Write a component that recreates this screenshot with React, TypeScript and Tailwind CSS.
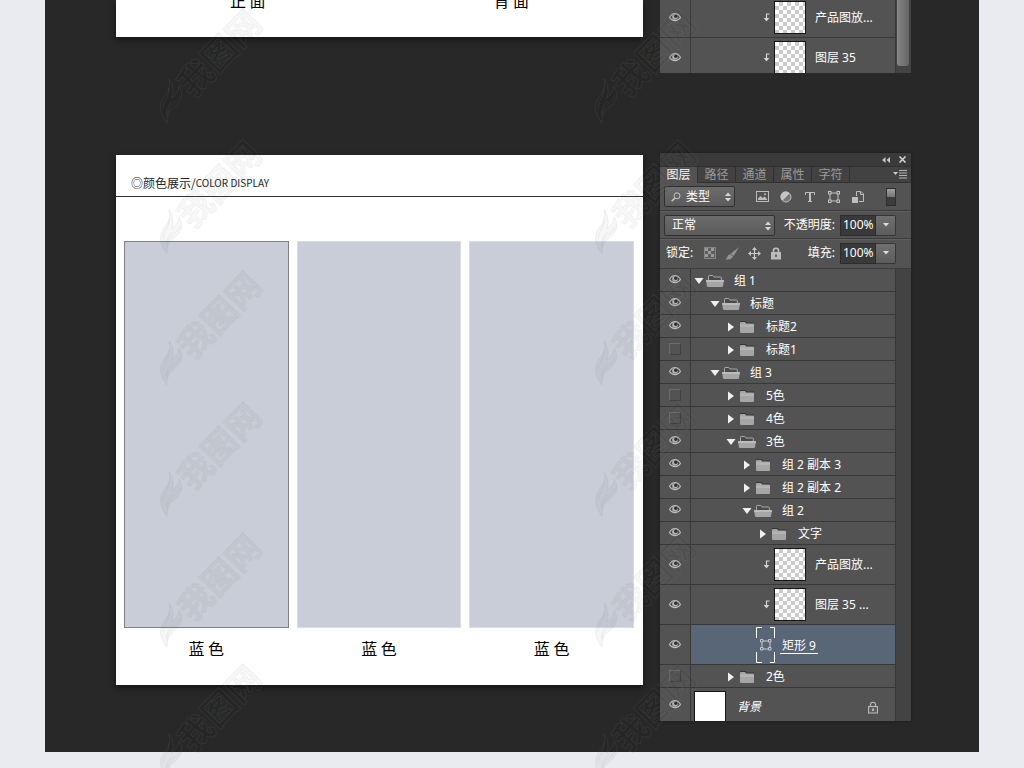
import type { ReactNode } from "react";

type LayerKind = "open" | "closed" | "clip" | "shape" | "background";

interface Layer {
  name: string;
  kind: LayerKind;
  indent?: string;
  hidden?: boolean;
}

const layers: Layer[] = [
  { name: "组 1", kind: "open", indent: "pl-[3px]" },
  { name: "标题", kind: "open", indent: "pl-[19px]" },
  { name: "标题2", kind: "closed", indent: "pl-[35px]" },
  { name: "标题1", kind: "closed", indent: "pl-[35px]", hidden: true },
  { name: "组 3", kind: "open", indent: "pl-[19px]" },
  { name: "5色", kind: "closed", indent: "pl-[35px]", hidden: true },
  { name: "4色", kind: "closed", indent: "pl-[35px]", hidden: true },
  { name: "3色", kind: "open", indent: "pl-[35px]" },
  { name: "组 2 副本 3", kind: "closed", indent: "pl-[51px]" },
  { name: "组 2 副本 2", kind: "closed", indent: "pl-[51px]" },
  { name: "组 2", kind: "open", indent: "pl-[51px]" },
  { name: "文字", kind: "closed", indent: "pl-[67px]" },
  { name: "产品图放...", kind: "clip" },
  { name: "图层 35 ...", kind: "clip" },
  { name: "矩形 9", kind: "shape" },
  { name: "2色", kind: "closed", indent: "pl-[35px]", hidden: true },
  { name: "背景", kind: "background" },
];

const tabs = ["图层", "路径", "通道", "属性", "字符"];
const swatches = ["蓝 色", "蓝 色", "蓝 色"];

/* ---------- icons ---------- */

function EyeIcon() {
  return (
    <svg className="w-3 h-[10px] -translate-y-px" viewBox="0 0 12 10" fill="none">
      <path d="M.5 5.500C2 2.500 4 1.500 6 1.500s4 1 5.500 4C10 7.800 8 8.700 6 8.700S2 7.800.5 5.500Z" fill="#4a4a4a" stroke="#bdbdbd" strokeWidth="1.200" />
      <circle cx="6" cy="4.800" r="2.900" fill="#b0b0b0" />
      <circle cx="6.800" cy="4.300" r="1.700" fill="#2c2c2c" />
    </svg>
  );
}

function Disclosure({ open }: { open: boolean }) {
  return (
    <svg className="w-[10px] h-[10px] shrink-0" viewBox="0 0 10 10" fill="#f0f0f0">
      {open ? <path d="M.5 2h9L5 8Z" /> : <path d="M2 .5v9L8 5Z" />}
    </svg>
  );
}

function FolderIcon({ open }: { open: boolean }) {
  return (
    <svg className="w-[18px] h-[13px] shrink-0" viewBox="0 0 18 13">
      {open ? (
        <>
          <path d="M2.500 5V1.200q0-.7.7-.7h3.300q.6 0 .9.600l.4.900h6.700q.8 0 .8.800V5" fill="#4a4a4a" stroke="#a9a9a9" />
          <path d="M0 5h18l-1 6.200q-.2.800-1 .8H2q-.8 0-1-.8Z" fill="#a6a6a6" />
          <path d="M0 5h18l-.3 2H.3Z" fill="#bcbcbc" />
        </>
      ) : (
        <>
          <path d="M3 0h4.500l1 1.500H16V3H2V1q0-1 1-1Z" fill="#333" />
          <path d="M2 2q0-1 1-1h4l1.200 1.500H15q1 0 1 1V11q0 1-1 1H3q-1 0-1-1Z" fill="#a6a6a6" />
          <path d="M2 3.500h14V6H2Z" fill="#b4b4b4" />
        </>
      )}
    </svg>
  );
}

function ClipArrow() {
  return (
    <svg className="w-[8px] h-[9px] shrink-0" viewBox="0 0 8 9">
      <path d="M6.500 1H3.500V6" fill="none" stroke="#d5d5d5" strokeWidth="1.200" />
      <path d="M.7 5h5.600L3.500 8.500Z" fill="#d5d5d5" />
    </svg>
  );
}

function ShapeIcon({ className }: { className: string }) {
  return (
    <svg className={className} viewBox="0 0 12 12" fill="#555" stroke="#c4c4c4">
      <path d="M2 2h8v8H2Z" fill="none" />
      <rect x=".5" y=".5" width="2.500" height="2.500" />
      <rect x="9" y=".5" width="2.500" height="2.500" />
      <rect x=".5" y="9" width="2.500" height="2.500" />
      <rect x="9" y="9" width="2.500" height="2.500" />
    </svg>
  );
}

function LockIcon({ filled }: { filled: boolean }) {
  return (
    <svg className="w-3 h-[13px]" viewBox="0 0 12 13">
      <path d="M3.500 6V3.800a2.500 2.500 0 0 1 5 0V6" fill="none" stroke="#c0c0c0" strokeWidth={filled ? 1.600 : 1.100} />
      <rect x="1.500" y="5.500" width="9" height="6.500" fill={filled ? "#bcbcbc" : "#5e5e5e"} stroke="#bcbcbc" />
      <path d="M6 7.500v2.500" stroke={filled ? "#444" : "#ccc"} strokeWidth="1.500" />
    </svg>
  );
}

function Spinner() {
  return (
    <svg className="absolute right-1 top-[6px] w-[6px] h-[10px] pointer-events-none" viewBox="0 0 6 10" fill="#d8d8d8">
      <path d="M0 4h6L3 .5Z" />
      <path d="M0 6h6L3 9.500Z" />
    </svg>
  );
}

function Thumb() {
  return (
    <span className="w-8 h-[33px] shrink-0 border border-[#151515] bg-white bg-[repeating-conic-gradient(#cbcbcb_0%_25%,#ffffff_0%_50%)] bg-[length:8px_8px]" />
  );
}

/* ---------- layer list ---------- */

function IconButton({ label, children }: { label: string; children: ReactNode }) {
  return (
    <button type="button" aria-label={label} className="w-[14px] h-[14px] flex items-center justify-center">
      {children}
    </button>
  );
}

function VisibilityCell({ layer }: { layer: Layer }) {
  return (
    <button
      type="button"
      aria-label={`显示 ${layer.name}`}
      aria-pressed={!layer.hidden}
      className="w-[31px] self-stretch shrink-0 flex items-center justify-center border-r border-[#383838]"
    >
      {layer.hidden ? <span className="w-3 h-3 border border-[#404040] border-t-[#6c6c6c] border-l-[#6c6c6c]" /> : <EyeIcon />}
    </button>
  );
}

function LayerRow({ layer }: { layer: Layer }) {
  if (layer.kind === "clip") {
    return (
      <li className="h-10 flex border-b border-[#383838]">
        <VisibilityCell layer={layer} />
        <div className="flex-1 flex items-center pl-[72px]">
          <ClipArrow />
          <span className="w-[3px]" />
          <Thumb />
          <span className="pl-[9px] whitespace-nowrap">{layer.name}</span>
        </div>
      </li>
    );
  }

  if (layer.kind === "shape") {
    return (
      <li className="h-10 flex border-b border-[#383838]">
        <VisibilityCell layer={layer} />
        <div className="flex-1 flex items-center pl-[65px] bg-[#596678]">
          <svg className="w-5 h-9 shrink-0" viewBox="0 0 20 36" fill="none" stroke="#fff">
            <path d="M.5 11V.5H6M14 .5h4.500V11M.5 25v10.500H6M14 35.500h4.500V25" />
            <g stroke="#c4c8ce">
              <path d="M6 14h8v8H6Z" />
              <path d="M4.500 12.500h2.500v2.500H4.500ZM12.500 12.500h2.500v2.500h-2.500ZM4.500 20.500h2.500v2.500H4.500ZM12.500 20.500h2.500v2.500h-2.500Z" fill="#596678" />
            </g>
          </svg>
          <span className="ml-1 px-[2px] mt-[2px] h-4 leading-4 border-b border-white">{layer.name}</span>
        </div>
      </li>
    );
  }

  if (layer.kind === "background") {
    return (
      <li className="h-[33px] flex overflow-hidden">
        <VisibilityCell layer={layer} />
        <div className="flex-1 flex items-start pl-[3px] pr-4 pt-[3px]">
          <span className="w-8 h-8 shrink-0 border border-[#151515] bg-white" />
          <span className="pl-[11px] pt-2 flex-1 italic">{layer.name}</span>
          <span className="pt-[10px]">
            <LockIcon filled={false} />
          </span>
        </div>
      </li>
    );
  }

  const open = layer.kind === "open";
  return (
    <li className="h-[23px] flex border-b border-[#383838]">
      <VisibilityCell layer={layer} />
      <div className={`flex-1 flex items-center pt-[2px] ${layer.indent}`}>
        <Disclosure open={open} />
        <span className="w-[2px]" />
        <FolderIcon open={open} />
        <span className="pl-[10px] whitespace-nowrap">{layer.name}</span>
      </div>
    </li>
  );
}

function ValueField({ id, label }: { id: string; label: string }) {
  return (
    <div className="flex items-center gap-[5px]">
      <label htmlFor={id} className="whitespace-nowrap">{label}</label>
      <div className="flex h-[21px]">
        <input
          id={id}
          defaultValue="100%"
          className="w-9 min-w-0 pl-[2px] bg-[#393939] border border-[#2c2c2c] text-white text-[12px] leading-4 outline-none"
        />
        <button
          type="button"
          aria-label="调整数值"
          className="w-5 flex items-center justify-center rounded-r-[2px] border border-l-0 border-[#363636] bg-linear-to-b from-[#707070] to-[#5c5c5c]"
        >
          <svg className="w-[6px] h-1" viewBox="0 0 6 4" fill="#ddd"><path d="M0 0h6L3 3.500Z" /></svg>
        </button>
      </div>
    </div>
  );
}

function LayersPanel() {
  return (
    <aside className="w-[251px] shrink-0 bg-[#535353] text-white shadow-[0_0_3px_#1c1c1c]">
      {/* Title bar */}
      <div className="h-[13px] flex items-center justify-end gap-2 pr-1 bg-[#3a3a3a]">
        <button type="button" aria-label="折叠面板">
          <svg className="w-2 h-[6px]" viewBox="0 0 8 6" fill="#c8c8c8"><path d="M3.500 0v6L0 3ZM8 0v6L4.500 3Z" /></svg>
        </button>
        <button type="button" aria-label="关闭面板">
          <svg className="w-[9px] h-[7px]" viewBox="0 0 9 7" stroke="#d0d0d0" strokeWidth="1.600"><path d="M1.500.5l6 6M7.500.5l-6 6" /></svg>
        </button>
      </div>

      {/* Tabs */}
      <div className="h-[17px] flex bg-[#424242] border-t border-[#303030]" role="tablist">
        {tabs.map((tab, i) => (
          <button
            key={tab}
            type="button"
            role="tab"
            aria-selected={i === 0}
            className={
              i === 0
                ? "w-[38px] leading-4 bg-[#535353] border-r border-[#303030]"
                : "w-[38px] leading-4 text-[#9a9a9a] border-r border-[#303030] border-b"
            }
          >
            {tab}
          </button>
        ))}
        <div className="flex-1 flex items-center justify-end pr-1 border-b border-[#303030]">
          <button type="button" aria-label="面板菜单">
            <svg className="w-[14px] h-[9px]" viewBox="0 0 14 9">
              <path d="M0 2h5L2.500 5Z" fill="#ccc" />
              <path d="M6 .5h8M6 3h8M6 5.500h8M6 8h8" stroke="#b5b5b5" />
            </svg>
          </button>
        </div>
      </div>

      {/* Filter row */}
      <div className="h-7 flex items-center pl-1 pr-[15px] border-b border-[#3c3c3c]">
        <div className="relative w-[71px] h-[21px]">
          <svg className="absolute left-[7px] top-[6px] w-[10px] h-[10px] pointer-events-none" viewBox="0 0 10 10" fill="none" stroke="#c8c8c8">
            <circle cx="6" cy="3.800" r="3" />
            <path d="M3.700 6.200L.7 9.200" strokeWidth="1.600" />
          </svg>
          <select
            aria-label="滤镜类型"
            className="appearance-none w-full h-full pl-[21px] text-[12px] leading-4 text-white rounded-[2px] border border-[#303030] bg-linear-to-b from-[#6c6c6c] to-[#5b5b5b]"
          >
            <option>类型</option>
          </select>
          <Spinner />
        </div>
        <div className="flex items-center gap-[10px] pl-5 flex-1">
          <IconButton label="像素图层">
            <svg className="w-[13px] h-[11px]" viewBox="0 0 13 11">
              <rect x=".5" y=".5" width="12" height="10" fill="none" stroke="#bdbdbd" />
              <path d="M2 9V7.500L4.500 5l2 2 2-1.500L11 8v1Z" fill="#bdbdbd" />
              <circle cx="9" cy="3.300" r="1" fill="#bdbdbd" />
            </svg>
          </IconButton>
          <IconButton label="调整图层">
            <svg className="w-3 h-3" viewBox="0 0 12 12">
              <circle cx="6" cy="6" r="5" fill="#777" stroke="#bdbdbd" />
              <path d="M9.500 2.500A5 5 0 1 0 2.500 9.500Z" fill="#c6c6c6" />
            </svg>
          </IconButton>
          <IconButton label="文字图层">
            <svg className="w-3 h-3" viewBox="0 0 12 12" fill="none" stroke="#c0c0c0">
              <path d="M1.500 4V1.500h9V4M4 10.500h4" />
              <path d="M6 1.500v9" strokeWidth="2" />
            </svg>
          </IconButton>
          <IconButton label="形状图层">
            <ShapeIcon className="w-3 h-3" />
          </IconButton>
          <IconButton label="智能对象">
            <svg className="w-3 h-3" viewBox="0 0 12 12">
              <path d="M4.500 5V.5H9L11.500 3v7.500H7" fill="none" stroke="#bdbdbd" />
              <path d="M8.500 0v3.500H12" fill="none" stroke="#bdbdbd" />
              <rect x="0" y="6" width="6" height="6" fill="#bdbdbd" />
            </svg>
          </IconButton>
        </div>
        <button type="button" aria-label="打开或关闭图层过滤" className="w-[10px] h-[18px] flex flex-col border border-[#2e2e2e] bg-[#3c3c3c]">
          <span className="w-full h-2 bg-linear-to-b from-[#a0a0a0] to-[#777777]" />
        </button>
      </div>

      {/* Blend mode and opacity */}
      <div className="h-7 flex items-center justify-between pl-1 pr-[15px] border-t border-t-[#5f5f5f] border-b border-b-[#3c3c3c]">
        <div className="relative w-[111px] h-[21px]">
          <select
            aria-label="混合模式"
            className="appearance-none w-full h-full pl-[7px] text-[12px] leading-4 text-white rounded-[2px] border border-[#303030] bg-linear-to-b from-[#6c6c6c] to-[#5b5b5b]"
          >
            <option>正常</option>
          </select>
          <Spinner />
        </div>
        <ValueField id="opacity" label="不透明度:" />
      </div>

      {/* Locks and fill */}
      <div className="h-[30px] flex items-center pl-[6px] pr-[15px] pb-[2px] border-t border-t-[#5f5f5f] border-b border-b-[#3c3c3c]">
        <span>锁定:</span>
        <div className="flex-1 flex items-center gap-2 pl-[10px]">
          <IconButton label="锁定透明像素">
            <svg className="w-3 h-3" viewBox="0 0 12 12">
              <rect x=".5" y=".5" width="11" height="11" fill="#5e5e5e" stroke="#858585" />
              <path d="M1 1h3v3H1ZM7 1h3v3H7ZM4 4h3v3H4ZM1 7h3v3H1ZM7 7h3v3H7Z" fill="#9a9a9a" />
            </svg>
          </IconButton>
          <IconButton label="锁定图像像素">
            <svg className="w-[14px] h-[13px]" viewBox="0 0 14 13" fill="#949494">
              <path d="M14 0L8.500 9 5.800 6.800Z" />
              <path d="M5.300 7.300l2.700 2C7 12.500 3 12.800 0 12.500 3 11.500 2 7.500 5.300 7.300Z" />
            </svg>
          </IconButton>
          <IconButton label="锁定位置">
            <svg className="w-[13px] h-[13px]" viewBox="0 0 13 13">
              <path d="M6.500 2v9M2 6.500h9" stroke="#c8c8c8" strokeWidth="1.200" />
              <path d="M6.500 0L9 3H4ZM6.500 13L9 10H4ZM0 6.500L3 4v5ZM13 6.500L10 4v5Z" fill="#c8c8c8" />
            </svg>
          </IconButton>
          <IconButton label="锁定全部">
            <LockIcon filled />
          </IconButton>
        </div>
        <ValueField id="fill" label="填充:" />
      </div>

      {/* Layers */}
      <div className="flex">
        <ul className="flex-1 min-w-0">
          {layers.map((layer) => (
            <LayerRow key={layer.name} layer={layer} />
          ))}
        </ul>
        <div className="w-4 bg-[#434343] border-l border-[#383838]" />
      </div>
    </aside>
  );
}

/* ---------- repeated site mark ---------- */

function Mark() {
  return (
    <svg className="w-[108px] h-[124px] shrink-0" viewBox="0 0 108 124" fill="#000" fillOpacity=".03" stroke="#8a8a8a" strokeOpacity=".12">
      <path d="M11 75c2 9-1 13-5 18-5 7-5 16 3 26 0-8 2-12 7-16 8-6 10-13 5-21 0 5-3 8-7 12 2-7 1-14-3-19Z" />
      <path d="M11 84c1 7-5 11-6 20M22 91c-3 9-12 9-13 21M15 97c-4 3-6 7-7 13" fill="none" />
      <text
        x="60"
        y="48"
        transform="rotate(-46 60 48)"
        textAnchor="middle"
        dominantBaseline="central"
        fontSize="34"
        className="font-bold font-['Noto_Sans_CJK_SC',sans-serif]"
      >
        我图网
      </text>
    </svg>
  );
}

function MarkColumn() {
  return (
    <div className="flex flex-col gap-[7px]">
      {[0, 1, 2, 3, 4, 5].map((n) => (
        <Mark key={n} />
      ))}
    </div>
  );
}

/* ---------- page ---------- */

export default function App() {
  return (
    <div className="relative min-h-screen overflow-hidden bg-[#e9ebf0] px-[45px] pb-4 text-[12px] leading-4 font-['Noto_Sans','Noto_Sans_CJK_SC',sans-serif]">
      <main className="bg-[#282828] pl-[71px] pr-[68px] pb-[31px]">
        {/* End of the previous board */}
        <section className="flex items-start gap-[17px] pb-20">
          <div className="flex-1 h-[37px] overflow-hidden bg-white shadow-[0_3px_6px_#151515] text-black text-[16px] leading-6 font-['Noto_Sans_CJK_SC',sans-serif]">
            <div className="-mt-3 grid grid-cols-2 text-center">
              <p>正 面</p>
              <p>背 面</p>
            </div>
          </div>
          <div className="w-[251px] h-[73px] shrink-0 flex overflow-hidden bg-[#535353] text-white">
            <ul className="flex-1 -mt-[2px]">
              <LayerRow layer={{ name: "产品图放...", kind: "clip" }} />
              <LayerRow layer={{ name: "图层 35", kind: "clip" }} />
            </ul>
            <div className="w-4 bg-[#434343] border-l border-[#383838] pl-px pr-[2px] pb-[7px] flex">
              <div className="flex-1 rounded-b-[3px] bg-linear-to-r from-[#858585] to-[#666666]" />
            </div>
          </div>
        </section>

        {/* Colour display board */}
        <section className="flex items-start gap-[17px]">
          <div className="flex-1 min-w-0 mt-[2px] bg-white text-black shadow-[0_3px_6px_#151515] font-['Noto_Sans_CJK_SC',sans-serif]">
            <h2 className="h-[42px] pt-[14px] pl-[15px] flex items-center border-b border-[#333] text-[12px] leading-5 text-[#222]">
              <span>◎</span>
              <span>颜色展示</span>
              <span>/</span>
              <span className="text-[10px]">COLOR DISPLAY</span>
            </h2>
            <div className="grid grid-cols-3 gap-2 pl-2 pr-[9px] pt-11 pb-[25px]">
              {swatches.map((name, i) => (
                <figure key={i}>
                  <div
                    className={
                      i === 0
                        ? "h-[387px] bg-[#c9cdd7] border border-[#808080]"
                        : "h-[387px] bg-[#c9cdd7] border border-[#d9dce3]"
                    }
                  />
                  <figcaption className="pt-2 text-center text-[16px] leading-6">{name}</figcaption>
                </figure>
              ))}
            </div>
          </div>
          <LayersPanel />
        </section>
      </main>

      <div aria-hidden="true" className="absolute inset-0 pl-[158px] pt-1 flex gap-[327px] pointer-events-none">
        <MarkColumn />
        <MarkColumn />
      </div>
    </div>
  );
}
